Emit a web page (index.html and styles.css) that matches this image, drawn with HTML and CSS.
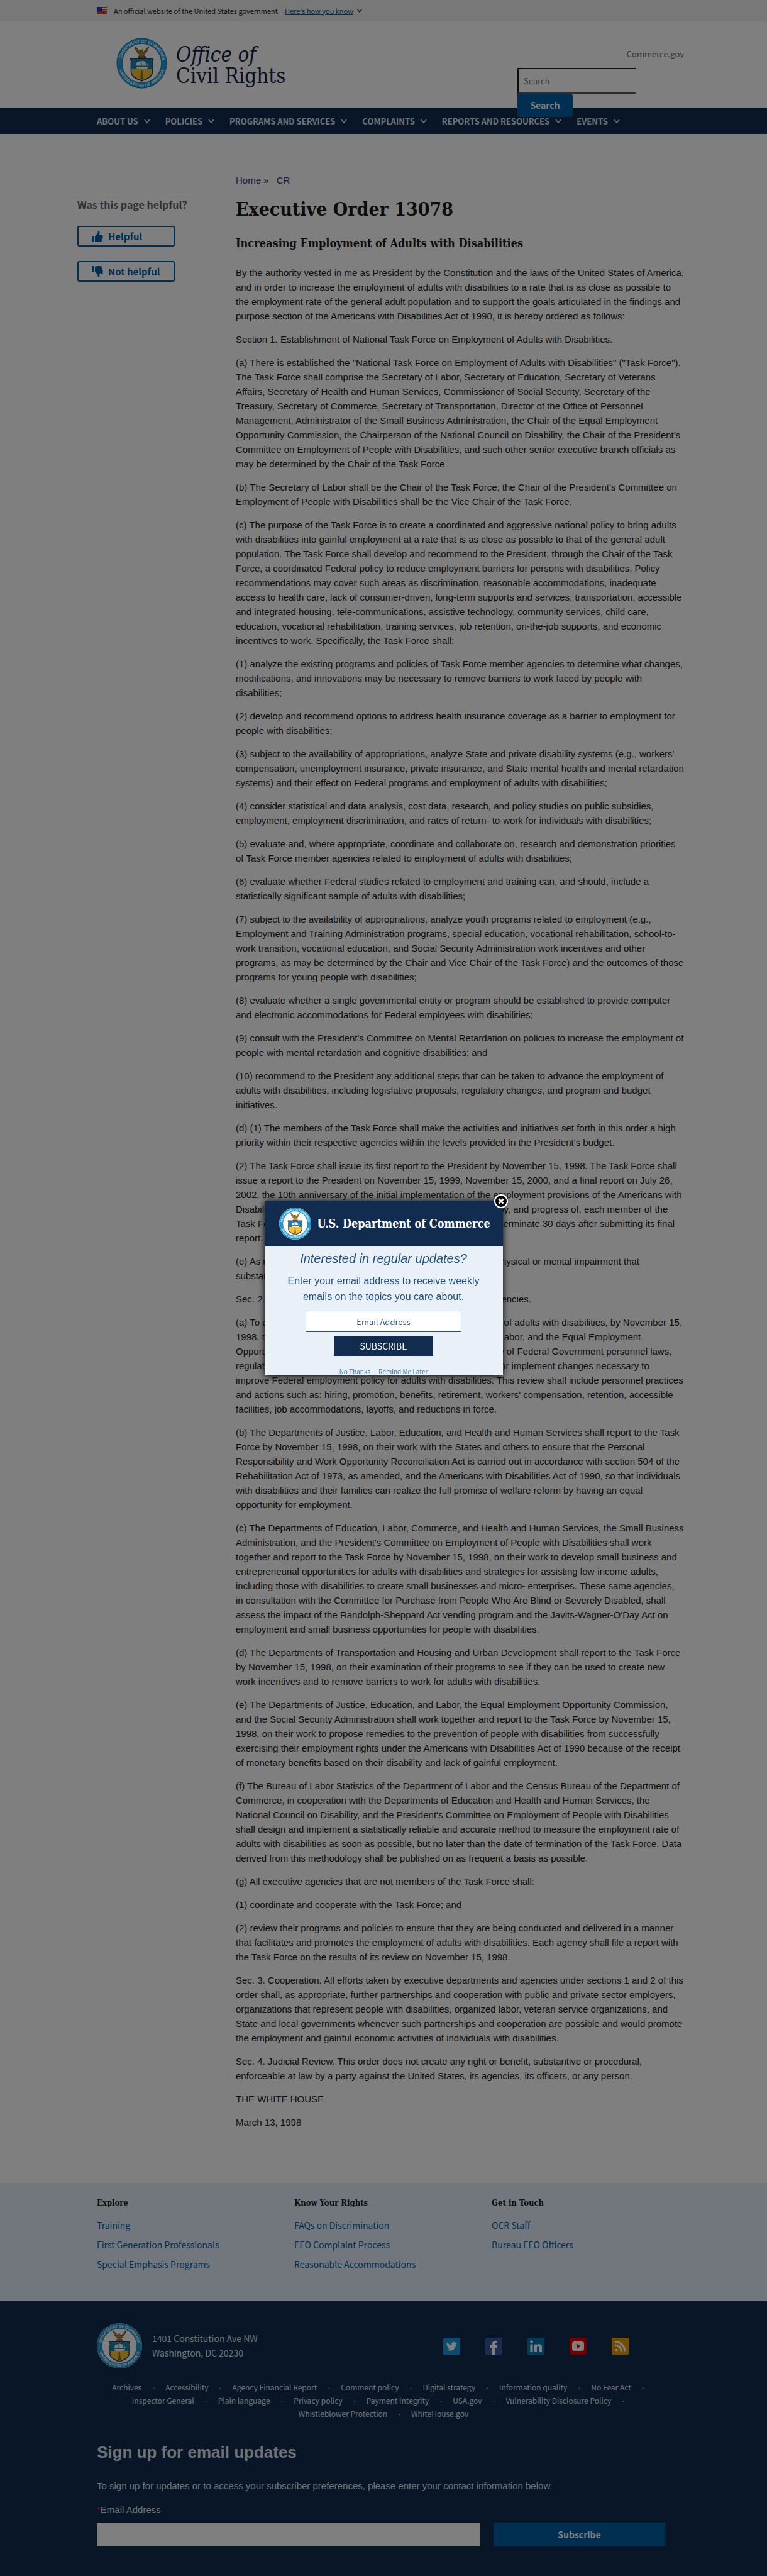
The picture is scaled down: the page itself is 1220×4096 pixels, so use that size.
FILE: index.html
```html
<!DOCTYPE html>
<html lang="en">
<head>
<meta charset="utf-8">
<meta name="viewport" content="width=device-width, initial-scale=1">
<title>Executive Order 13078 | Office of Civil Rights</title>
<link rel="stylesheet" href="styles.css">
</head>
<body>

<svg class="sprite" aria-hidden="true">
  <defs>
    <path id="ring-top" d="M9.5 50A40.5 40.5 0 0 1 90.5 50"/>
    <path id="ring-bottom" d="M4 50A46 46 0 0 0 96 50"/>
  </defs>
  <symbol id="seal" viewBox="0 0 100 100">
    <circle cx="50" cy="50" r="50" fill="#fff"/>
    <circle cx="50" cy="50" r="49" fill="#1c9ad6" stroke="#0d6ba3" stroke-width="1"/>
    <circle cx="50" cy="50" r="38.5" fill="#fff" stroke="#0d6ba3" stroke-width="1"/>
    <g fill="#fff" font-family="'Liberation Sans', sans-serif" font-size="8" font-weight="700" text-anchor="middle">
      <text><textPath href="#ring-top" startOffset="50%">DEPARTMENT OF COMMERCE</textPath></text>
      <text><textPath href="#ring-bottom" startOffset="50%">UNITED STATES OF AMERICA</textPath></text>
    </g>
    <path d="M36 17c2 9 6 14 11 17l-4 3 5-1 2 3 2-3 5 1-4-3c5-3 9-8 11-17-4 3-8 8-11 12l-1-4-2-2-3 2 1 4c-3-4-7-9-12-12z" fill="#a5832b" stroke="#4a3510" stroke-width="1"/>
    <path d="M42 38h17l-2 3H44z" fill="#b9332b"/>
    <path d="M28 41h44v3c-2 1-2 3-1 5v18c0 9-9 13-21 18-12-5-21-9-21-18V49c1-2 1-4-1-5z" fill="#f5c33b" stroke="#1b3f5c" stroke-width="2"/>
    <path d="M29 42h42c-1 3-1 5 0 7v12H29V49c1-2 1-4 0-7z" fill="#1b7fae"/>
    <path d="M38 57h25l-3 4H41zM40 48l8-2v9h-9zM50 45l7 2 2 8h-9zM60 49l4 6h-3z" fill="#f4f6f8"/>
    <path d="M49 64h2l2 17-3 2-3-2z" fill="#8a6a1c"/>
  </symbol>
  <symbol id="chevron" viewBox="0 0 12 8">
    <path d="M1 1l5 6 5-6" fill="none" stroke="currentColor" stroke-width="2"/>
  </symbol>
</svg>

<section class="banner" aria-label="Official government website">
  <div class="container banner-row">
    <svg class="flag" viewBox="0 0 16 12" aria-hidden="true">
      <path fill="#fff" d="M0 0h16v12H0z"/>
      <path fill="#db3e1f" d="M0 0h16v2H0zM0 4h16v1.500H0zM0 7h16v2H0zM0 10h16v2H0z"/>
      <path fill="#1e33b1" d="M0 0h8v7H0z"/>
    </svg>
    <span>An official website of the United States government</span>
    <a href="#know" class="banner-link"><span>Here's how you know</span><svg class="banner-chevron"><use href="#chevron"/></svg></a>
  </div>
</section>

<header class="header">
  <div class="container header-row">
    <a class="brand" href="#home">
      <svg class="brand-seal" aria-hidden="true"><use href="#seal"/></svg>
      <span class="brand-name"><em>Office of</em><br>Civil Rights</span>
    </a>
    <div class="tools">
      <a class="tools-link" href="#commerce">Commerce.gov</a>
      <form class="search">
        <input class="search-input" type="search" placeholder="Search" aria-label="Search">
        <button class="search-button" type="button">Search</button>
      </form>
    </div>
  </div>
</header>

<nav class="nav" aria-label="Primary">
  <ul class="container nav-list">
    <li><button type="button">ABOUT US<svg><use href="#chevron"/></svg></button></li>
    <li><button type="button">POLICIES<svg><use href="#chevron"/></svg></button></li>
    <li><button type="button">PROGRAMS AND SERVICES<svg><use href="#chevron"/></svg></button></li>
    <li><button type="button">COMPLAINTS<svg><use href="#chevron"/></svg></button></li>
    <li><button type="button">REPORTS AND RESOURCES<svg><use href="#chevron"/></svg></button></li>
    <li><button type="button">EVENTS<svg><use href="#chevron"/></svg></button></li>
  </ul>
</nav>

<main class="main">
  <aside class="feedback">
    <h2 class="feedback-title">Was this page helpful?</h2>
    <button class="vote" type="button">
      <svg viewBox="0 0 18 18" aria-hidden="true"><path fill="currentColor" d="M0 8h4v10H0zM5 9l4-4 1-5c3 0 3 3 2 6h4c2 0 2 2 1 3 1 1 1 2 0 3 0 1 0 2-1 3 0 2-1 3-3 3H9c-2 0-3-1-4-1z"/></svg>
      Helpful
    </button>
    <button class="vote" type="button">
      <svg viewBox="0 0 18 18" aria-hidden="true"><path fill="currentColor" d="M0 0h4v10H0zM5 9l4 4 1 5c3 0 3-3 2-6h4c2 0 2-2 1-3 1-1 1-2 0-3 0-1 0-2-1-3 0-2-1-3-3-3H9C7 0 6 1 5 1z"/></svg>
      Not helpful
    </button>
  </aside>

  <article class="article">
    <nav class="crumbs" aria-label="Breadcrumb"><a href="#home">Home</a> » <a class="crumb-last" href="#cr">CR</a></nav>
    <h1>Executive Order 13078</h1>
    <h2>Increasing Employment of Adults with Disabilities</h2>
    <p>By the authority vested in me as President by the Constitution and the laws of the United States of America, and in order to increase the employment of adults with disabilities to a rate that is as close as possible to the employment rate of the general adult population and to support the goals articulated in the findings and purpose section of the Americans with Disabilities Act of 1990, it is hereby ordered as follows:</p>
    <p>Section 1. Establishment of National Task Force on Employment of Adults with Disabilities.</p>
    <p>(a) There is established the "National Task Force on Employment of Adults with Disabilities" ("Task Force"). The Task Force shall comprise the Secretary of Labor, Secretary of Education, Secretary of Veterans Affairs, Secretary of Health and Human Services, Commissioner of Social Security, Secretary of the Treasury, Secretary of Commerce, Secretary of Transportation, Director of the Office of Personnel Management, Administrator of the Small Business Administration, the Chair of the Equal Employment Opportunity Commission, the Chairperson of the National Council on Disability, the Chair of the President's Committee on Employment of People with Disabilities, and such other senior executive branch officials as may be determined by the Chair of the Task Force.</p>
    <p>(b) The Secretary of Labor shall be the Chair of the Task Force; the Chair of the President's Committee on Employment of People with Disabilities shall be the Vice Chair of the Task Force.</p>
    <p>(c) The purpose of the Task Force is to create a coordinated and aggressive national policy to bring adults with disabilities into gainful employment at a rate that is as close as possible to that of the general adult population. The Task Force shall develop and recommend to the President, through the Chair of the Task Force, a coordinated Federal policy to reduce employment barriers for persons with disabilities. Policy recommendations may cover such areas as discrimination, reasonable accommodations, inadequate access to health care, lack of consumer-driven, long-term supports and services, transportation, accessible and integrated housing, tele-communications, assistive technology, community services, child care, education, vocational rehabilitation, training services, job retention, on-the-job supports, and economic incentives to work. Specifically, the Task Force shall:</p>
    <p>(1) analyze the existing programs and policies of Task Force member agencies to determine what changes, modifications, and innovations may be necessary to remove barriers to work faced by people with disabilities;</p>
    <p>(2) develop and recommend options to address health insurance coverage as a barrier to employment for people with disabilities;</p>
    <p>(3) subject to the availability of appropriations, analyze State and private disability systems (e.g., workers' compensation, unemployment insurance, private insurance, and State mental health and mental retardation systems) and their effect on Federal programs and employment of adults with disabilities;</p>
    <p>(4) consider statistical and data analysis, cost data, research, and policy studies on public subsidies, employment, employment discrimination, and rates of return- to-work for individuals with disabilities;</p>
    <p>(5) evaluate and, where appropriate, coordinate and collaborate on, research and demonstration priorities of Task Force member agencies related to employment of adults with disabilities;</p>
    <p>(6) evaluate whether Federal studies related to employment and training can, and should, include a statistically significant sample of adults with disabilities;</p>
    <p>(7) subject to the availability of appropriations, analyze youth programs related to employment (e.g., Employment and Training Administration programs, special education, vocational rehabilitation, school-to-work transition, vocational education, and Social Security Administration work incentives and other programs, as may be determined by the Chair and Vice Chair of the Task Force) and the outcomes of those programs for young people with disabilities;</p>
    <p>(8) evaluate whether a single governmental entity or program should be established to provide computer and electronic accommodations for Federal employees with disabilities;</p>
    <p>(9) consult with the President's Committee on Mental Retardation on policies to increase the employment of people with mental retardation and cognitive disabilities; and</p>
    <p>(10) recommend to the President any additional steps that can be taken to advance the employment of adults with disabilities, including legislative proposals, regulatory changes, and program and budget initiatives.</p>
    <p>(d) (1) The members of the Task Force shall make the activities and initiatives set forth in this order a high priority within their respective agencies within the levels provided in the President's budget.</p>
    <p>(2) The Task Force shall issue its first report to the President by November 15, 1998. The Task Force shall issue a report to the President on November 15, 1999, November 15, 2000, and a final report on July 26, 2002, the 10th anniversary of the initial implementation of the employment provisions of the Americans with Disabilities Act. The reports shall describe all the actions taken by, and progress of, each member of the Task Force toward carrying out this order. The Task Force shall terminate 30 days after submitting its final report.</p>
    <p>(e) As used herein, an adult with a disability is a person with a physical or mental impairment that substantially limits at least one major life activity.</p>
    <p>Sec. 2. Specific Activities by Members of the Task Force and Agencies.</p>
    <p>(a) To ensure that the Federal Government is a model employer of adults with disabilities, by November 15, 1998, the Office of Personnel Management, the Department of Labor, and the Equal Employment Opportunity Commission shall submit to the Task Force a review of Federal Government personnel laws, regulations, and policies and, as appropriate, shall recommend or implement changes necessary to improve Federal employment policy for adults with disabilities. This review shall include personnel practices and actions such as: hiring, promotion, benefits, retirement, workers' compensation, retention, accessible facilities, job accommodations, layoffs, and reductions in force.</p>
    <p>(b) The Departments of Justice, Labor, Education, and Health and Human Services shall report to the Task Force by November 15, 1998, on their work with the States and others to ensure that the Personal Responsibility and Work Opportunity Reconciliation Act is carried out in accordance with section 504 of the Rehabilitation Act of 1973, as amended, and the Americans with Disabilities Act of 1990, so that individuals with disabilities and their families can realize the full promise of welfare reform by having an equal opportunity for employment.</p>
    <p>(c) The Departments of Education, Labor, Commerce, and Health and Human Services, the Small Business Administration, and the President's Committee on Employment of People with Disabilities shall work together and report to the Task Force by November 15, 1998, on their work to develop small business and entrepreneurial opportunities for adults with disabilities and strategies for assisting low-income adults, including those with disabilities to create small businesses and micro- enterprises. These same agencies, in consultation with the Committee for Purchase from People Who Are Blind or Severely Disabled, shall assess the impact of the Randolph-Sheppard Act vending program and the Javits-Wagner-O'Day Act on employment and small business opportunities for people with disabilities.</p>
    <p>(d) The Departments of Transportation and Housing and Urban Development shall report to the Task Force by November 15, 1998, on their examination of their programs to see if they can be used to create new work incentives and to remove barriers to work for adults with disabilities.</p>
    <p>(e) The Departments of Justice, Education, and Labor, the Equal Employment Opportunity Commission, and the Social Security Administration shall work together and report to the Task Force by November 15, 1998, on their work to propose remedies to the prevention of people with disabilities from successfully exercising their employment rights under the Americans with Disabilities Act of 1990 because of the receipt of monetary benefits based on their disability and lack of gainful employment.</p>
    <p>(f) The Bureau of Labor Statistics of the Department of Labor and the Census Bureau of the Department of Commerce, in cooperation with the Departments of Education and Health and Human Services, the National Council on Disability, and the President's Committee on Employment of People with Disabilities shall design and implement a statistically reliable and accurate method to measure the employment rate of adults with disabilities as soon as possible, but no later than the date of termination of the Task Force. Data derived from this methodology shall be published on as frequent a basis as possible.</p>
    <p>(g) All executive agencies that are not members of the Task Force shall:</p>
    <p>(1) coordinate and cooperate with the Task Force; and</p>
    <p>(2) review their programs and policies to ensure that they are being conducted and delivered in a manner that facilitates and promotes the employment of adults with disabilities. Each agency shall file a report with the Task Force on the results of its review on November 15, 1998.</p>
    <p>Sec. 3. Cooperation. All efforts taken by executive departments and agencies under sections 1 and 2 of this order shall, as appropriate, further partnerships and cooperation with public and private sector employers, organizations that represent people with disabilities, organized labor, veteran service organizations, and State and local governments whenever such partnerships and cooperation are possible and would promote the employment and gainful economic activities of individuals with disabilities.</p>
    <p>Sec. 4. Judicial Review. This order does not create any right or benefit, substantive or procedural, enforceable at law by a party against the United States, its agencies, its officers, or any person.</p>
    <p>THE WHITE HOUSE</p>
    <p>March 13, 1998</p>
  </article>
</main>

<footer class="footer">
  <div class="explore">
    <div class="container explore-grid">
      <section>
        <h2>Explore</h2>
        <ul>
          <li><a href="#training">Training</a></li>
          <li><a href="#first-gen">First Generation Professionals</a></li>
          <li><a href="#emphasis">Special Emphasis Programs</a></li>
        </ul>
      </section>
      <section>
        <h2>Know Your Rights</h2>
        <ul>
          <li><a href="#faqs">FAQs on Discrimination</a></li>
          <li><a href="#eeo">EEO Complaint Process</a></li>
          <li><a href="#accommodations">Reasonable Accommodations</a></li>
        </ul>
      </section>
      <section>
        <h2>Get in Touch</h2>
        <ul>
          <li><a href="#staff">OCR Staff</a></li>
          <li><a href="#officers">Bureau EEO Officers</a></li>
        </ul>
      </section>
    </div>
  </div>

  <div class="bottom">
    <div class="container">
      <div class="agency">
        <svg class="agency-seal" aria-hidden="true"><use href="#seal"/></svg>
        <address>1401 Constitution Ave NW<br>Washington, DC 20230</address>
        <div class="social">
          <a href="#twitter" aria-label="Twitter"><svg viewBox="0 0 27 27"><rect width="27" height="27" rx="2" fill="#1b95e0"/><path fill="#fff" d="M22 8.500c-.7.300-1.300.5-2 .6.700-.4 1.200-1.100 1.500-1.900-.7.400-1.400.7-2.200.8a3.500 3.500 0 0 0-6 3.200c-3-.1-5.500-1.500-7.200-3.700-.9 1.600-.5 3.600 1.100 4.700-.6 0-1.100-.2-1.600-.4 0 1.700 1.200 3.100 2.800 3.400-.5.100-1 .2-1.600.1.500 1.400 1.700 2.400 3.300 2.400a7 7 0 0 1-5.100 1.500c7 4.300 15.300-.2 15.300-8.900.7-.5 1.300-1.100 1.700-1.800z"/></svg></a>
          <a href="#facebook" aria-label="Facebook"><svg viewBox="0 0 27 27"><rect width="27" height="27" rx="2" fill="#3b5998"/><path fill="#fff" d="M11 27V16H7.500v-4H11V9.500C11 6.500 13 5 16 5c1.500 0 3 .2 3 .2v3.500h-2c-1.600 0-2 .8-2 1.800V12h4l-.7 4H15v11z"/></svg></a>
          <a href="#linkedin" aria-label="LinkedIn"><svg viewBox="0 0 27 27"><rect width="27" height="27" rx="2" fill="#007bb6"/><path fill="#fff" d="M4.500 10.500H8.500V23H4.500zM11 10.500h4v1.700c2-3 8-2.700 8 3V23h-4v-7c0-3.500-4-3-4 0v7h-4z"/><circle cx="6.500" cy="6.500" r="2.300" fill="#fff"/></svg></a>
          <a href="#youtube" aria-label="YouTube"><svg viewBox="0 0 27 27"><rect width="27" height="27" rx="2" fill="#e00000"/><rect x="4" y="6" width="19" height="15" rx="4" fill="#fff"/><path fill="#e00000" d="M11 9.500v8l7-4z"/></svg></a>
          <a href="#rss" aria-label="RSS"><svg viewBox="0 0 27 27"><rect width="27" height="27" rx="2" fill="#e79c00"/><circle cx="7.500" cy="20" r="2.300" fill="#fff"/><path fill="none" stroke="#fff" stroke-width="3" d="M5 12c6 0 10.500 4.500 10.500 10.500M5 6.500c9 0 16 7 16 16"/></svg></a>
        </div>
      </div>

      <ul class="links">
        <li><a href="#archives">Archives</a></li>
        <li><a href="#accessibility">Accessibility</a></li>
        <li><a href="#finance">Agency Financial Report</a></li>
        <li><a href="#comment">Comment policy</a></li>
        <li><a href="#digital">Digital strategy</a></li>
        <li><a href="#quality">Information quality</a></li>
        <li><a href="#nofear">No Fear Act</a></li>
        <li><a href="#inspector">Inspector General</a></li>
        <li><a href="#plain">Plain language</a></li>
        <li><a href="#privacy">Privacy policy</a></li>
        <li><a href="#payment">Payment Integrity</a></li>
        <li><a href="#usa">USA.gov</a></li>
        <li><a href="#vulnerability">Vulnerability Disclosure Policy</a></li>
        <li><a href="#whistleblower">Whistleblower Protection</a></li>
        <li><a href="#whitehouse">WhiteHouse.gov</a></li>
      </ul>

      <form class="signup">
        <h2>Sign up for email updates</h2>
        <p>To sign up for updates or to access your subscriber preferences, please enter your contact information below.</p>
        <label for="signup-email"><span class="required">*</span>Email Address</label>
        <div class="signup-row">
          <input id="signup-email" type="email">
          <button type="button">Subscribe</button>
        </div>
      </form>
    </div>
  </div>
</footer>

<div class="overlay">
  <div class="dialog" role="dialog" aria-label="Email updates">
    <button class="close" type="button" aria-label="Close">
      <svg viewBox="0 0 22 22"><circle cx="11" cy="11" r="10" fill="#000" stroke="#fff" stroke-width="2"/><path d="M7.500 7.500l7 7M14.500 7.500l-7 7" stroke="#fff" stroke-width="3"/></svg>
    </button>
    <div class="dialog-head">
      <svg class="dialog-seal" aria-hidden="true"><use href="#seal"/></svg>
      <span>U.S. Department of Commerce</span>
    </div>
    <form class="dialog-body">
      <h2>Interested in regular updates?</h2>
      <p>Enter your email address to receive weekly emails on the topics you care about.</p>
      <input type="email" placeholder="Email Address" aria-label="Email Address">
      <button class="dialog-submit" type="button">SUBSCRIBE</button>
      <div class="dialog-links"><a href="#no">No Thanks</a><a href="#later">Remind Me Later</a></div>
    </form>
  </div>
</div>

</body>
</html>
```
FILE: styles.css
```css
:root {
  --sans: "Liberation Sans", Arial, sans-serif;
  --ui: "Noto Sans CJK SC", "Noto Sans", sans-serif;
  --serif: "DejaVu Serif Condensed", "DejaVu Serif", serif;
  --navy: #112c4e;
  --blue: #005ea2;
}

* { box-sizing: border-box; }

body {
  display: flex;
  flex-direction: column;
  min-height: 100vh;
  margin: 0;
  background: #fff;
  color: #1b1b1b;
  font-family: var(--sans);
  font-size: 15px;
  line-height: 23px;
}

button, input { font: inherit; margin: 0; border-radius: 0; }
a { color: inherit; text-decoration: none; }
ul { margin: 0; padding: 0; list-style: none; }
h1, h2, p { margin: 0; }

.sprite { display: none; }

.container {
  width: 100%;
  max-width: 1220px;
  margin: 0 auto;
  padding: 0 162px 0 154px;
}

/* Government banner */
.banner {
  background: #f0f0f0;
  font-family: var(--ui);
  font-size: 11px;
}
.banner-row { display: flex; align-items: center; height: 34px; }
.flag { width: 16px; height: 12px; margin-right: 11px; }
.banner-link {
  display: flex;
  align-items: center;
  gap: 6px;
  margin-left: 11px;
  color: var(--blue);
}
.banner-link span { text-decoration: underline; }
.banner-chevron { width: 8px; height: 6px; color: #1b1b1b; }

/* Header */
.header-row {
  display: flex;
  justify-content: space-between;
  height: 137px;
  padding-right: 132px;
}
.brand {
  display: flex;
  align-items: flex-start;
  gap: 14px;
  padding: 26px 0 0 31px;
  color: #112046;
}
.brand-seal { width: 81px; height: 81px; }
.brand-name {
  padding-top: 10px;
  font-family: var(--serif);
  font-size: 33px;
  line-height: 34px;
}
.tools {
  width: 265px;
  padding-top: 40px;
  font-family: var(--ui);
}
.tools-link {
  display: block;
  color: #5b616b;
  font-size: 13px;
  text-align: right;
}
.search {
  display: flex;
  flex-direction: column;
  align-items: flex-start;
  margin-top: 11px;
}
.search-input {
  width: 188px;
  height: 41px;
  padding: 0 8px;
  border: 2px solid #1b1b1b;
  border-bottom-color: #5b5b5b;
  border-right: 0;
  background: transparent;
  font-size: 13px;
}
.search-input::placeholder { color: #757575; }
.search-button {
  z-index: 1;
  width: 88px;
  height: 37px;
  padding: 0;
  border: 0;
  border-radius: 0 4px 4px 4px;
  background: var(--blue);
  color: #fff;
  font-size: 14px;
  font-weight: 700;
}

/* Primary navigation */
.nav { background: var(--navy); }
.nav-list { display: flex; gap: 24px; height: 42px; align-items: center; }
.nav-list button {
  display: flex;
  align-items: center;
  gap: 9px;
  padding: 0;
  border: 0;
  background: none;
  color: #dce4ef;
  font-family: var(--ui);
  font-size: 13px;
  font-weight: 700;
  white-space: nowrap;
}
.nav-list svg { width: 10px; height: 7px; }

/* Page body */
.main {
  display: grid;
  grid-template-columns: 221px minmax(0, 713px);
  column-gap: 31px;
  width: 100%;
  max-width: 1220px;
  margin: 0 auto;
  padding: 62px 0 71px 123px;
}
.feedback {
  display: flex;
  flex-direction: column;
  align-items: flex-start;
  margin-top: 30px;
  border-top: 1px solid #5b616b;
  font-family: var(--ui);
  align-self: start;
}
.feedback-title {
  margin: 8px 0 22px;
  color: #5b616b;
  font-size: 16px;
  line-height: 23px;
}
.vote {
  display: flex;
  align-items: center;
  gap: 8px;
  width: 155px;
  height: 33px;
  margin-bottom: 23px;
  padding: 0 21px;
  border: 2px solid var(--blue);
  border-radius: 3px;
  background: transparent;
  color: var(--blue);
  font-size: 15px;
  font-weight: 700;
  text-align: left;
}
.vote svg { width: 18px; height: 18px; }

.crumbs a { color: #4c2c92; }
.crumb-last { margin-left: 8px; }
.article h1 {
  margin-top: 12px;
  font-family: var(--serif);
  font-size: 30px;
  line-height: 46px;
}
.article h2 {
  margin-top: 18px;
  margin-bottom: 22px;
  font-family: var(--serif);
  font-size: 18px;
  line-height: 26px;
}
.article p { margin-bottom: 14px; }

/* Footer columns */
.footer { display: flex; flex: 1; flex-direction: column; }
.explore { background: #e4eefa; font-family: var(--ui); font-size: 14px; }
.explore-grid {
  display: grid;
  grid-template-columns: repeat(3, 314px);
  min-height: 188px;
  padding-right: 0;
  padding-top: 20px;
}
.explore h2 {
  margin-bottom: 13px;
  font-family: var(--serif);
  font-size: 13px;
  line-height: 23px;
}
.explore ul { display: grid; gap: 8px; }
.explore a { color: var(--blue); }

/* Footer bottom */
.bottom {
  flex: 1;
  padding: 35px 0 48px;
  background: var(--navy);
  color: #dce4ef;
}
.agency {
  display: flex;
  align-items: center;
  gap: 16px;
  font-family: var(--ui);
  font-size: 14px;
}
.agency-seal { width: 72px; height: 72px; }
address { font-style: normal; }
.social {
  display: flex;
  gap: 40px;
  margin: 0 58px 0 auto;
}
.social a, .social svg { display: block; width: 27px; height: 27px; }

.links {
  display: flex;
  flex-wrap: wrap;
  justify-content: center;
  margin-top: 20px;
  padding-left: 8px;
  font-family: var(--ui);
  font-size: 12px;
  line-height: 20px;
}
.links li:not(:last-child)::after {
  content: "·";
  margin: 0 17px;
  font-family: var(--sans);
}

.signup h2 { margin-top: 35px; font-size: 26px; line-height: 30px; }
.signup p { margin-top: 27px; }
.signup label { display: block; margin-top: 15px; }
.required { color: #e31c3d; }
.signup-row { display: flex; align-items: center; gap: 21px; margin-top: 9px; }
.signup input {
  flex: 1;
  height: 37px;
  padding: 0 8px;
  border: 0;
  background: #fff;
}
.signup button {
  width: 273px;
  height: 38px;
  border: 0;
  background: var(--blue);
  color: #fff;
  font-family: var(--ui);
  font-size: 14px;
  font-weight: 700;
}

/* Subscription dialog */
.overlay {
  position: fixed;
  inset: 0;
  z-index: 10;
  display: flex;
  align-items: center;
  justify-content: center;
  background: rgba(0, 0, 0, .5);
}
.dialog {
  position: relative;
  width: 379px;
  background: #e9f0f8;
  box-shadow: 0 1px 10px #000;
}
.close {
  position: absolute;
  top: -10px;
  right: -8px;
  width: 22px;
  height: 22px;
  padding: 0;
  border: 0;
  background: none;
}
.close svg { display: block; }
.dialog-head {
  display: flex;
  align-items: center;
  gap: 10px;
  height: 73px;
  padding-left: 23px;
  background: var(--navy);
  color: #fff;
  font-family: var(--serif);
  font-size: 18px;
  font-weight: 700;
  white-space: nowrap;
}
.dialog-seal { width: 51px; height: 51px; }
.dialog-body {
  display: flex;
  flex-direction: column;
  align-items: center;
  height: 205px;
  overflow: hidden;
  color: #205081;
  text-align: center;
}
.dialog-body h2 {
  margin-top: 7px;
  font-size: 20px;
  font-style: italic;
  font-weight: 400;
  line-height: 25px;
}
.dialog-body p {
  max-width: 330px;
  margin: 10px 0;
  font-size: 16px;
  line-height: 25px;
}
.dialog-body input {
  flex: none;
  width: 248px;
  height: 34px;
  border: 1px solid #205081;
  background: #fff;
  font-family: var(--ui);
  font-size: 13px;
  text-align: center;
}
.dialog-body input::placeholder { color: #33567f; }
.dialog-submit {
  flex: none;
  width: 158px;
  height: 32px;
  margin-top: 6px;
  border: 0;
  background: var(--navy);
  color: #fff;
  font-family: var(--ui);
  font-size: 14px;
}
.dialog-links {
  display: flex;
  gap: 13px;
  margin-top: 13px;
  color: #3a76b5;
  font-family: var(--ui);
  font-size: 10px;
}
```
